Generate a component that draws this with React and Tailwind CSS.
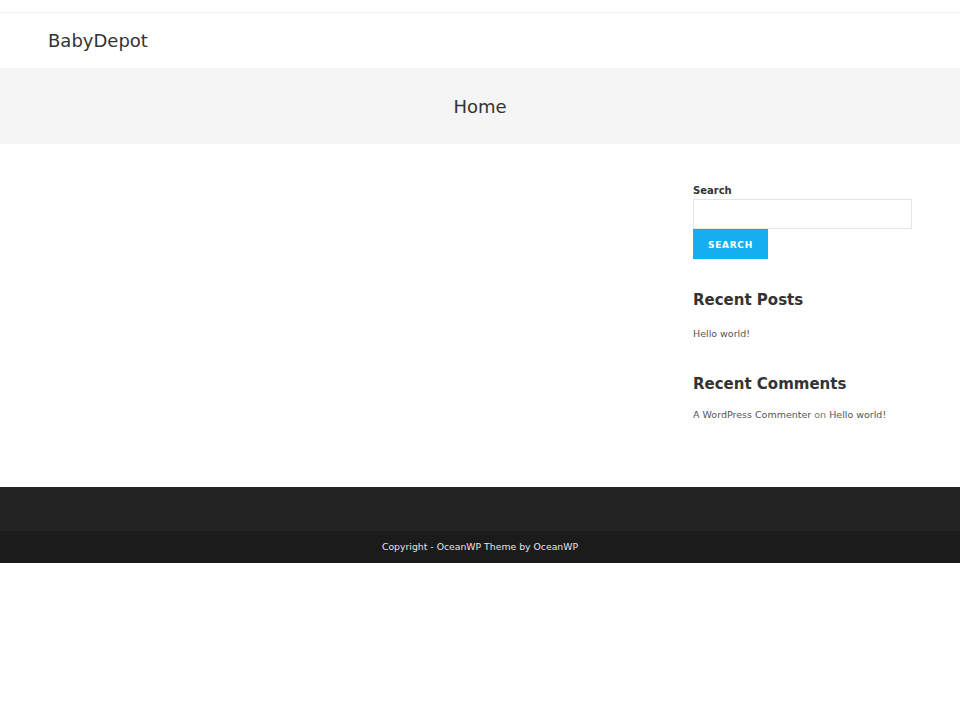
import React from 'react';

const font = { fontFamily: '"DejaVu Sans", Verdana, sans-serif' };

const Sidebar = () => (
  <aside className="w-[219px] pt-[40px] pb-[65px]">
    <div>
      <label className="block text-[10px] font-bold text-[#333] leading-[14px] mb-[1px]">Search</label>
      <input
        type="text"
        className="block w-full h-[30px] border border-[#e5e5e5] bg-white outline-none"
      />
      <button className="block h-[30px] px-[15px] pt-[3px] bg-[#13aff0] text-white text-[9px] font-bold tracking-[0.7px] uppercase">
        Search
      </button>
    </div>

    <div className="mt-[32px]">
      <h4 className="text-[15px] font-bold text-[#333] leading-[18px]">Recent Posts</h4>
      <ul className="mt-[18px]">
        <li className="text-[9.5px] text-[#555] leading-[14px]">Hello world!</li>
      </ul>
    </div>

    <div className="mt-[34px]">
      <h4 className="text-[15px] font-bold text-[#333] leading-[18px]">Recent Comments</h4>
      <ul className="mt-[15px]">
        <li className="text-[9.5px] text-[#555] leading-[14px]">
          A WordPress Commenter <span className="text-[#777]">on</span> Hello world!
        </li>
      </ul>
    </div>
  </aside>
);

export default function App() {
  return (
    <div className="w-[960px] min-h-[720px] bg-white" style={font}>
      {/* top bar */}
      <div className="h-[13px] border-b border-[#f1f1f1]" />

      {/* header */}
      <header className="h-[55px] px-[48px] flex items-center">
        <span className="text-[18px] text-[#333]">BabyDepot</span>
      </header>

      {/* page title */}
      <div className="h-[76px] bg-[#f5f5f5] flex items-center justify-center">
        <h1 className="text-[18px] text-[#333]">Home</h1>
      </div>

      {/* content */}
      <main className="px-[48px] flex">
        <div className="flex-1" />
        <Sidebar />
      </main>

      {/* footer */}
      <footer>
        <div className="h-[44px] bg-[#222]" />
        <div className="h-[32px] bg-[#1b1b1b] flex items-center justify-center">
          <span className="text-[9.3px] text-[#e5e5e5]">Copyright - OceanWP Theme by OceanWP</span>
        </div>
      </footer>
    </div>
  );
}
